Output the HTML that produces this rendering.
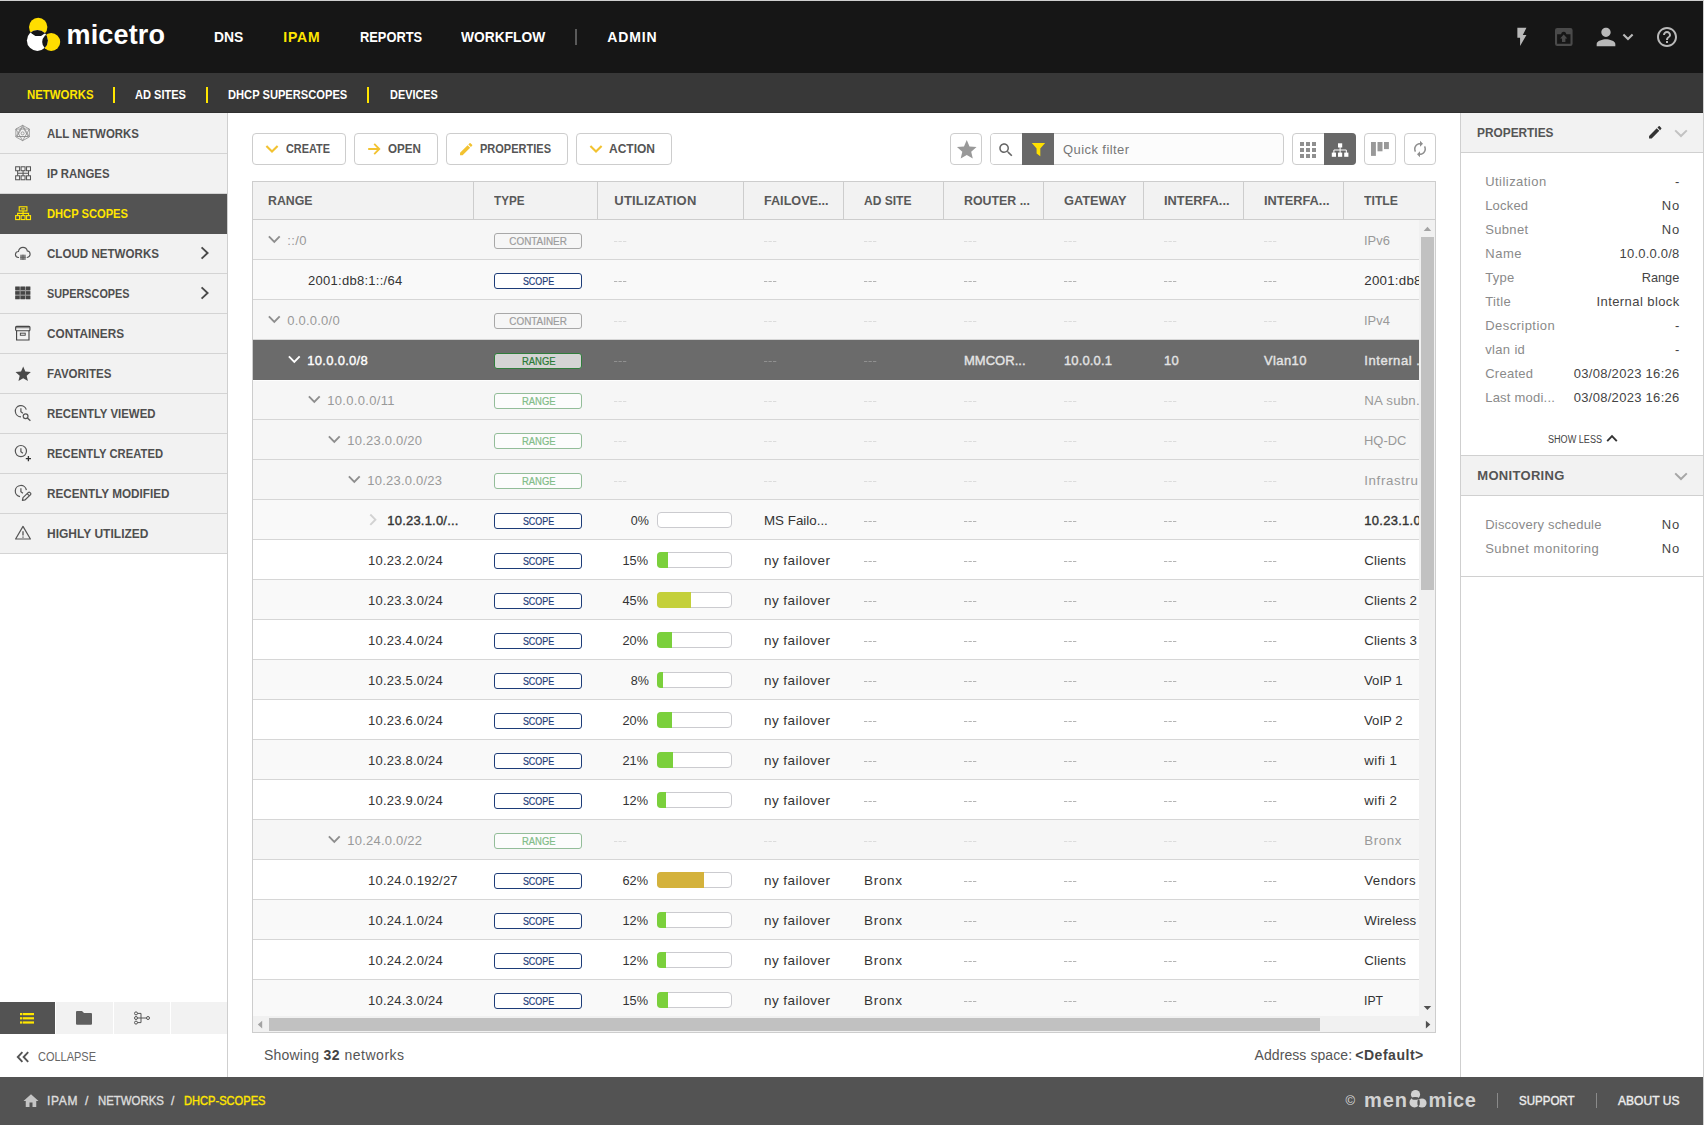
<!DOCTYPE html>
<html><head><meta charset="utf-8"><title>Micetro</title><style>
html,body{margin:0;padding:0;}
body{width:1704px;height:1125px;position:relative;overflow:hidden;background:#fff;font-family:'Liberation Sans', sans-serif;}
.b{position:absolute;box-sizing:border-box;}
.t{position:absolute;white-space:pre;line-height:20px;font-family:'Liberation Sans', sans-serif;}
.clip{position:absolute;overflow:hidden;}
</style></head><body>
<div class="b" style="left:0px;top:0px;width:1704px;height:73px;background:#161616;"></div>
<div class="b" style="left:0px;top:0px;width:1704px;height:1px;background:#cfcfcf;"></div>
<div class="b" style="left:0px;top:73px;width:1704px;height:40px;background:#383838;"></div>
<div class="b" style="left:0px;top:112px;width:1704px;height:1px;background:#303030;"></div>
<svg class="b" style="left:24px;top:14px;" width="38" height="40" viewBox="0 0 38 40">
<defs><clipPath id="lgA"><circle cx="14.2" cy="12.9" r="9.2"/></clipPath><clipPath id="lgC"><circle cx="27.2" cy="28" r="9"/></clipPath></defs>
<circle cx="14.2" cy="12.9" r="9.2" fill="#ffdd00"/>
<circle cx="27.2" cy="28" r="9" fill="#ffdd00"/>
<circle cx="13.4" cy="26.4" r="10.5" fill="#fff"/>
<circle cx="13.4" cy="26.4" r="10.5" fill="#161616" clip-path="url(#lgA)"/>
<circle cx="13.4" cy="26.4" r="10.5" fill="#161616" clip-path="url(#lgC)"/>
</svg>
<span class="t" style="top:24.5px;font-size:27px;font-weight:700;color:#fff;letter-spacing:0.159px;left:66.5px;">micetro</span>
<span class="t" style="top:27.0px;font-size:14px;font-weight:700;color:#fff;transform:scaleX(0.9911);transform-origin:0 50%;left:214.4px;">DNS</span>
<span class="t" style="top:27.0px;font-size:14px;font-weight:700;color:#ffe600;letter-spacing:0.81px;left:283.3px;">IPAM</span>
<span class="t" style="top:27.0px;font-size:14px;font-weight:700;color:#fff;transform:scaleX(0.9189);transform-origin:0 50%;left:360.2px;">REPORTS</span>
<span class="t" style="top:27.0px;font-size:14px;font-weight:700;color:#fff;transform:scaleX(0.9844);transform-origin:0 50%;left:461.4px;">WORKFLOW</span>
<div class="b" style="left:575px;top:29px;width:2px;height:16px;background:#5a5a5a;"></div>
<span class="t" style="top:27.0px;font-size:14px;font-weight:700;color:#fff;letter-spacing:0.827px;left:607.3px;">ADMIN</span>
<span class="t" style="top:84.5px;font-size:12px;font-weight:700;color:#ffe600;transform:scaleX(0.95);transform-origin:0 50%;left:26.6px;">NETWORKS</span>
<div class="b" style="left:113px;top:87px;width:2px;height:16px;background:#ffe600;"></div>
<span class="t" style="top:84.5px;font-size:12px;font-weight:700;color:#fff;transform:scaleX(0.9215);transform-origin:0 50%;left:135px;">AD SITES</span>
<div class="b" style="left:206px;top:87px;width:2px;height:16px;background:#ffe600;"></div>
<span class="t" style="top:84.5px;font-size:12px;font-weight:700;color:#fff;transform:scaleX(0.9285);transform-origin:0 50%;left:228px;">DHCP SUPERSCOPES</span>
<div class="b" style="left:367px;top:87px;width:2px;height:16px;background:#ffe600;"></div>
<span class="t" style="top:84.5px;font-size:12px;font-weight:700;color:#fff;transform:scaleX(0.9091);transform-origin:0 50%;left:389.5px;">DEVICES</span>
<div class="b" style="left:0px;top:113px;width:227px;height:441px;background:#f2f2f2;"></div>
<div class="b" style="left:227px;top:113px;width:1px;height:964px;background:#cfcfcf;"></div>
<div class="b" style="left:0px;top:153px;width:227px;height:1px;background:#d4d4d4;"></div>
<span class="t" style="top:123.5px;font-size:12px;font-weight:700;color:#4f4f4f;transform:scaleX(0.9538);transform-origin:0 50%;left:47px;">ALL NETWORKS</span>
<div class="b" style="left:0px;top:193px;width:227px;height:1px;background:#d4d4d4;"></div>
<span class="t" style="top:163.5px;font-size:12px;font-weight:700;color:#4f4f4f;transform:scaleX(0.9499);transform-origin:0 50%;left:47px;">IP RANGES</span>
<div class="b" style="left:0px;top:233px;width:227px;height:1px;background:#d4d4d4;"></div>
<div class="b" style="left:0px;top:194px;width:227px;height:40px;background:#535353;"></div>
<span class="t" style="top:203.5px;font-size:12px;font-weight:700;color:#ffe600;transform:scaleX(0.9295);transform-origin:0 50%;left:47px;">DHCP SCOPES</span>
<div class="b" style="left:0px;top:273px;width:227px;height:1px;background:#d4d4d4;"></div>
<span class="t" style="top:243.5px;font-size:12px;font-weight:700;color:#4f4f4f;transform:scaleX(0.9655);transform-origin:0 50%;left:47px;">CLOUD NETWORKS</span>
<div class="b" style="left:0px;top:313px;width:227px;height:1px;background:#d4d4d4;"></div>
<span class="t" style="top:283.5px;font-size:12px;font-weight:700;color:#4f4f4f;transform:scaleX(0.903);transform-origin:0 50%;left:47px;">SUPERSCOPES</span>
<div class="b" style="left:0px;top:353px;width:227px;height:1px;background:#d4d4d4;"></div>
<span class="t" style="top:323.5px;font-size:12px;font-weight:700;color:#4f4f4f;transform:scaleX(0.9815);transform-origin:0 50%;left:47px;">CONTAINERS</span>
<div class="b" style="left:0px;top:393px;width:227px;height:1px;background:#d4d4d4;"></div>
<span class="t" style="top:363.5px;font-size:12px;font-weight:700;color:#4f4f4f;transform:scaleX(0.9609);transform-origin:0 50%;left:47px;">FAVORITES</span>
<div class="b" style="left:0px;top:433px;width:227px;height:1px;background:#d4d4d4;"></div>
<span class="t" style="top:403.5px;font-size:12px;font-weight:700;color:#4f4f4f;transform:scaleX(0.9515);transform-origin:0 50%;left:47px;">RECENTLY VIEWED</span>
<div class="b" style="left:0px;top:473px;width:227px;height:1px;background:#d4d4d4;"></div>
<span class="t" style="top:443.5px;font-size:12px;font-weight:700;color:#4f4f4f;transform:scaleX(0.937);transform-origin:0 50%;left:47px;">RECENTLY CREATED</span>
<div class="b" style="left:0px;top:513px;width:227px;height:1px;background:#d4d4d4;"></div>
<span class="t" style="top:483.5px;font-size:12px;font-weight:700;color:#4f4f4f;transform:scaleX(0.9772);transform-origin:0 50%;left:47px;">RECENTLY MODIFIED</span>
<div class="b" style="left:0px;top:553px;width:227px;height:1px;background:#d4d4d4;"></div>
<span class="t" style="top:523.5px;font-size:12px;font-weight:700;color:#4f4f4f;letter-spacing:0.011px;left:47px;">HIGHLY UTILIZED</span>
<div class="b" style="left:0px;top:1002px;width:55px;height:32px;background:#535353;"></div>
<div class="b" style="left:56px;top:1002px;width:57px;height:32px;background:#f2f2f2;"></div>
<div class="b" style="left:114px;top:1002px;width:56px;height:32px;background:#f2f2f2;"></div>
<div class="b" style="left:171px;top:1002px;width:56px;height:32px;background:#f2f2f2;"></div>
<span class="t" style="top:1046.5px;font-size:12px;color:#666;transform:scaleX(0.9152);transform-origin:0 50%;left:37.5px;">COLLAPSE</span>
<div class="b" style="left:0px;top:1077px;width:1704px;height:48px;background:#535353;"></div>
<span class="t" style="top:1090.5px;font-size:12px;-webkit-text-stroke:0.38px;color:#dcdcdc;letter-spacing:0.682px;left:47px;">IPAM</span>
<span class="t" style="top:1090.5px;font-size:12px;-webkit-text-stroke:0.38px;color:#dcdcdc;left:85px;">/</span>
<span class="t" style="top:1090.5px;font-size:12px;-webkit-text-stroke:0.38px;color:#dcdcdc;transform:scaleX(0.9518);transform-origin:0 50%;left:97.5px;">NETWORKS</span>
<span class="t" style="top:1090.5px;font-size:12px;-webkit-text-stroke:0.38px;color:#dcdcdc;left:171px;">/</span>
<span class="t" style="top:1090.5px;font-size:12px;-webkit-text-stroke:0.38px;color:#ffe600;transform:scaleX(0.926);transform-origin:0 50%;left:184px;">DHCP-SCOPES</span>
<span class="t" style="top:1090.5px;font-size:13px;color:#ddd;left:1345.4px;">©</span>
<span class="t" style="top:1090.0px;font-size:20px;font-weight:700;color:#d2d2d2;letter-spacing:0.938px;left:1364px;">men</span>
<span class="t" style="top:1090.0px;font-size:20px;font-weight:700;color:#d2d2d2;letter-spacing:0.635px;left:1428.5px;">mice</span>
<svg class="b" style="left:1408px;top:1088px;" width="22" height="22" viewBox="0 0 22 22">
<circle cx="7.5" cy="6.5" r="4.6" fill="#d2d2d2"/>
<circle cx="6.5" cy="14.5" r="5" fill="#d2d2d2"/>
<circle cx="14" cy="15" r="4.6" fill="#d2d2d2"/>
<ellipse cx="7.2" cy="10.4" rx="3.4" ry="1.4" fill="#535353"/>
<ellipse cx="10.6" cy="14.8" rx="1.2" ry="3.3" fill="#535353"/>
</svg>
<div class="b" style="left:1497px;top:1093px;width:1px;height:15px;background:#8a8a8a;"></div>
<span class="t" style="top:1090.5px;font-size:12px;-webkit-text-stroke:0.38px;color:#ececec;transform:scaleX(0.9603);transform-origin:0 50%;left:1519.3px;">SUPPORT</span>
<div class="b" style="left:1596px;top:1093px;width:1px;height:15px;background:#8a8a8a;"></div>
<span class="t" style="top:1090.5px;font-size:12px;-webkit-text-stroke:0.38px;color:#ececec;letter-spacing:0.054px;left:1618px;">ABOUT US</span>
<div class="b" style="left:1703px;top:0px;width:1px;height:1125px;background:#cfcfcf;"></div>
<div class="b" style="left:252px;top:133px;width:94px;height:32px;background:#fff;border:1px solid #cdcdcd;border-radius:4px;"></div>
<span class="t" style="top:139.0px;font-size:12px;font-weight:700;color:#555;transform:scaleX(0.9081);transform-origin:0 50%;left:285.5px;">CREATE</span>
<div class="b" style="left:354px;top:133px;width:84px;height:32px;background:#fff;border:1px solid #cdcdcd;border-radius:4px;"></div>
<span class="t" style="top:139.0px;font-size:12px;font-weight:700;color:#555;transform:scaleX(0.9701);transform-origin:0 50%;left:387.5px;">OPEN</span>
<div class="b" style="left:446px;top:133px;width:122px;height:32px;background:#fff;border:1px solid #cdcdcd;border-radius:4px;"></div>
<span class="t" style="top:139.0px;font-size:12px;font-weight:700;color:#555;transform:scaleX(0.9178);transform-origin:0 50%;left:479.5px;">PROPERTIES</span>
<div class="b" style="left:576px;top:133px;width:96px;height:32px;background:#fff;border:1px solid #cdcdcd;border-radius:4px;"></div>
<span class="t" style="top:139.0px;font-size:12px;font-weight:700;color:#555;left:609px;">ACTION</span>
<div class="b" style="left:950px;top:133px;width:32px;height:32px;background:#fff;border:1px solid #cdcdcd;border-radius:4px;"></div>
<div class="b" style="left:990px;top:133px;width:294px;height:32px;background:#fcfcfc;border:1px solid #cdcdcd;border-radius:4px;"></div>
<div class="b" style="left:991px;top:134px;width:31px;height:30px;background:#fff;border-radius:3px;"></div>
<div class="b" style="left:1022px;top:133px;width:32px;height:32px;background:#686868;"></div>
<span class="t" style="top:139.5px;font-size:13px;color:#777;letter-spacing:0.418px;left:1063px;">Quick filter</span>
<div class="b" style="left:1292px;top:133px;width:64px;height:32px;background:#fff;border:1px solid #cdcdcd;border-radius:4px;"></div>
<div class="b" style="left:1324px;top:133px;width:32px;height:32px;background:#686868;border-radius:0 4px 4px 0;"></div>
<div class="b" style="left:1364px;top:133px;width:32px;height:32px;background:#fff;border:1px solid #cdcdcd;border-radius:4px;"></div>
<div class="b" style="left:1404px;top:133px;width:32px;height:32px;background:#fff;border:1px solid #cdcdcd;border-radius:4px;"></div>
<div class="b" style="left:252px;top:181px;width:1184px;height:852px;border:1px solid #cdcdcd;"></div>
<div class="b" style="left:253px;top:182px;width:1182px;height:37px;background:#f2f2f2;"></div>
<div class="b" style="left:253px;top:219px;width:1182px;height:1px;background:#cdcdcd;"></div>
<div class="b" style="left:473px;top:182px;width:1px;height:37px;background:#cdcdcd;"></div>
<div class="b" style="left:597px;top:182px;width:1px;height:37px;background:#cdcdcd;"></div>
<div class="b" style="left:743px;top:182px;width:1px;height:37px;background:#cdcdcd;"></div>
<div class="b" style="left:843px;top:182px;width:1px;height:37px;background:#cdcdcd;"></div>
<div class="b" style="left:943px;top:182px;width:1px;height:37px;background:#cdcdcd;"></div>
<div class="b" style="left:1043px;top:182px;width:1px;height:37px;background:#cdcdcd;"></div>
<div class="b" style="left:1143px;top:182px;width:1px;height:37px;background:#cdcdcd;"></div>
<div class="b" style="left:1243px;top:182px;width:1px;height:37px;background:#cdcdcd;"></div>
<div class="b" style="left:1343px;top:182px;width:1px;height:37px;background:#cdcdcd;"></div>
<span class="t" style="top:190.5px;font-size:13px;font-weight:700;color:#595959;transform:scaleX(0.9478);transform-origin:0 50%;left:268.3px;">RANGE</span>
<span class="t" style="top:190.5px;font-size:13px;font-weight:700;color:#595959;transform:scaleX(0.8979);transform-origin:0 50%;left:494.2px;">TYPE</span>
<span class="t" style="top:190.5px;font-size:13px;font-weight:700;color:#595959;letter-spacing:0.208px;left:614.3px;">UTILIZATION</span>
<span class="t" style="top:190.5px;font-size:13px;font-weight:700;color:#595959;transform:scaleX(0.9704);transform-origin:0 50%;left:764.1px;">FAILOVE...</span>
<span class="t" style="top:190.5px;font-size:13px;font-weight:700;color:#595959;transform:scaleX(0.926);transform-origin:0 50%;left:864.1px;">AD SITE</span>
<span class="t" style="top:190.5px;font-size:13px;font-weight:700;color:#595959;transform:scaleX(0.9518);transform-origin:0 50%;left:964.1px;">ROUTER ...</span>
<span class="t" style="top:190.5px;font-size:13px;font-weight:700;color:#595959;transform:scaleX(0.983);transform-origin:0 50%;left:1064.1px;">GATEWAY</span>
<span class="t" style="top:190.5px;font-size:13px;font-weight:700;color:#595959;transform:scaleX(0.9857);transform-origin:0 50%;left:1164.1px;">INTERFA...</span>
<span class="t" style="top:190.5px;font-size:13px;font-weight:700;color:#595959;transform:scaleX(0.9857);transform-origin:0 50%;left:1264.1px;">INTERFA...</span>
<span class="t" style="top:190.5px;font-size:13px;font-weight:700;color:#595959;transform:scaleX(0.9416);transform-origin:0 50%;left:1364.1px;">TITLE</span>
<div class="clip" style="left:0;top:0;width:1419px;height:1016px;">
<div class="b" style="left:253px;top:220px;width:1166px;height:39px;background:#f6f6f6;"></div>
<div class="b" style="left:253px;top:259px;width:1166px;height:1px;background:#d6d6d6;"></div>
<svg class="b" style="left:267.6px;top:235px;" width="13" height="9" viewBox="0 0 13 9"><path d="M0.9 1.4 L6.3 6.9 L11.7 1.4" fill="none" stroke="#8e8e8e" stroke-width="1.9"/></svg>
<span class="t" style="top:230.5px;font-size:13px;color:#999;letter-spacing:0.349px;left:287.3px;">::/0</span>
<div class="b" style="left:494px;top:233px;width:88px;height:16px;background:transparent;border:1px solid #a8a8a8;border-radius:3px;"></div>
<span class="t" style="top:231.75px;font-size:10px;-webkit-text-stroke:0.2px;color:#9c9c9c;transform:scaleX(0.9904);transform-origin:50% 50%;left:509.22px;">CONTAINER</span>
<svg class="b" style="left:614px;top:240px;" width="14" height="3" viewBox="0 0 14 3"><path d="M0 1.5 H3.3 M4.5 1.5 H7.8 M9 1.5 H12.3" stroke="#dcdcdc" stroke-width="1"/></svg>
<svg class="b" style="left:764px;top:240px;" width="14" height="3" viewBox="0 0 14 3"><path d="M0 1.5 H3.3 M4.5 1.5 H7.8 M9 1.5 H12.3" stroke="#dcdcdc" stroke-width="1"/></svg>
<svg class="b" style="left:864px;top:240px;" width="14" height="3" viewBox="0 0 14 3"><path d="M0 1.5 H3.3 M4.5 1.5 H7.8 M9 1.5 H12.3" stroke="#dcdcdc" stroke-width="1"/></svg>
<svg class="b" style="left:964px;top:240px;" width="14" height="3" viewBox="0 0 14 3"><path d="M0 1.5 H3.3 M4.5 1.5 H7.8 M9 1.5 H12.3" stroke="#dcdcdc" stroke-width="1"/></svg>
<svg class="b" style="left:1064px;top:240px;" width="14" height="3" viewBox="0 0 14 3"><path d="M0 1.5 H3.3 M4.5 1.5 H7.8 M9 1.5 H12.3" stroke="#dcdcdc" stroke-width="1"/></svg>
<svg class="b" style="left:1164px;top:240px;" width="14" height="3" viewBox="0 0 14 3"><path d="M0 1.5 H3.3 M4.5 1.5 H7.8 M9 1.5 H12.3" stroke="#dcdcdc" stroke-width="1"/></svg>
<svg class="b" style="left:1264px;top:240px;" width="14" height="3" viewBox="0 0 14 3"><path d="M0 1.5 H3.3 M4.5 1.5 H7.8 M9 1.5 H12.3" stroke="#dcdcdc" stroke-width="1"/></svg>
<span class="t" style="top:230.5px;font-size:13.3px;color:#999;transform:scaleX(0.9733);transform-origin:0 50%;left:1364.3px;">IPv6</span>
<div class="b" style="left:253px;top:260px;width:1166px;height:39px;background:#f9f9f9;"></div>
<div class="b" style="left:253px;top:299px;width:1166px;height:1px;background:#d6d6d6;"></div>
<span class="t" style="top:270.5px;font-size:13px;color:#333;letter-spacing:0.261px;left:308.1px;">2001:db8:1::/64</span>
<div class="b" style="left:494px;top:273px;width:88px;height:16px;background:#fff;border:1px solid #1d3c78;border-radius:3px;"></div>
<span class="t" style="top:271.75px;font-size:10px;-webkit-text-stroke:0.2px;color:#1d3c78;transform:scaleX(0.891);transform-origin:50% 50%;left:520.79px;">SCOPE</span>
<svg class="b" style="left:614px;top:280px;" width="14" height="3" viewBox="0 0 14 3"><path d="M0 1.5 H3.3 M4.5 1.5 H7.8 M9 1.5 H12.3" stroke="#b4b4b4" stroke-width="1"/></svg>
<svg class="b" style="left:764px;top:280px;" width="14" height="3" viewBox="0 0 14 3"><path d="M0 1.5 H3.3 M4.5 1.5 H7.8 M9 1.5 H12.3" stroke="#b4b4b4" stroke-width="1"/></svg>
<svg class="b" style="left:864px;top:280px;" width="14" height="3" viewBox="0 0 14 3"><path d="M0 1.5 H3.3 M4.5 1.5 H7.8 M9 1.5 H12.3" stroke="#b4b4b4" stroke-width="1"/></svg>
<svg class="b" style="left:964px;top:280px;" width="14" height="3" viewBox="0 0 14 3"><path d="M0 1.5 H3.3 M4.5 1.5 H7.8 M9 1.5 H12.3" stroke="#b4b4b4" stroke-width="1"/></svg>
<svg class="b" style="left:1064px;top:280px;" width="14" height="3" viewBox="0 0 14 3"><path d="M0 1.5 H3.3 M4.5 1.5 H7.8 M9 1.5 H12.3" stroke="#b4b4b4" stroke-width="1"/></svg>
<svg class="b" style="left:1164px;top:280px;" width="14" height="3" viewBox="0 0 14 3"><path d="M0 1.5 H3.3 M4.5 1.5 H7.8 M9 1.5 H12.3" stroke="#b4b4b4" stroke-width="1"/></svg>
<svg class="b" style="left:1264px;top:280px;" width="14" height="3" viewBox="0 0 14 3"><path d="M0 1.5 H3.3 M4.5 1.5 H7.8 M9 1.5 H12.3" stroke="#b4b4b4" stroke-width="1"/></svg>
<span class="t" style="top:270.5px;font-size:13.3px;color:#333;letter-spacing:0.241px;left:1364.3px;">2001:db8:1::/64</span>
<div class="b" style="left:253px;top:300px;width:1166px;height:39px;background:#f6f6f6;"></div>
<div class="b" style="left:253px;top:339px;width:1166px;height:1px;background:#d6d6d6;"></div>
<svg class="b" style="left:267.6px;top:315px;" width="13" height="9" viewBox="0 0 13 9"><path d="M0.9 1.4 L6.3 6.9 L11.7 1.4" fill="none" stroke="#8e8e8e" stroke-width="1.9"/></svg>
<span class="t" style="top:310.5px;font-size:13px;color:#999;letter-spacing:0.214px;left:287.3px;">0.0.0.0/0</span>
<div class="b" style="left:494px;top:313px;width:88px;height:16px;background:transparent;border:1px solid #a8a8a8;border-radius:3px;"></div>
<span class="t" style="top:311.75px;font-size:10px;-webkit-text-stroke:0.2px;color:#9c9c9c;transform:scaleX(0.9904);transform-origin:50% 50%;left:509.22px;">CONTAINER</span>
<svg class="b" style="left:614px;top:320px;" width="14" height="3" viewBox="0 0 14 3"><path d="M0 1.5 H3.3 M4.5 1.5 H7.8 M9 1.5 H12.3" stroke="#dcdcdc" stroke-width="1"/></svg>
<svg class="b" style="left:764px;top:320px;" width="14" height="3" viewBox="0 0 14 3"><path d="M0 1.5 H3.3 M4.5 1.5 H7.8 M9 1.5 H12.3" stroke="#dcdcdc" stroke-width="1"/></svg>
<svg class="b" style="left:864px;top:320px;" width="14" height="3" viewBox="0 0 14 3"><path d="M0 1.5 H3.3 M4.5 1.5 H7.8 M9 1.5 H12.3" stroke="#dcdcdc" stroke-width="1"/></svg>
<svg class="b" style="left:964px;top:320px;" width="14" height="3" viewBox="0 0 14 3"><path d="M0 1.5 H3.3 M4.5 1.5 H7.8 M9 1.5 H12.3" stroke="#dcdcdc" stroke-width="1"/></svg>
<svg class="b" style="left:1064px;top:320px;" width="14" height="3" viewBox="0 0 14 3"><path d="M0 1.5 H3.3 M4.5 1.5 H7.8 M9 1.5 H12.3" stroke="#dcdcdc" stroke-width="1"/></svg>
<svg class="b" style="left:1164px;top:320px;" width="14" height="3" viewBox="0 0 14 3"><path d="M0 1.5 H3.3 M4.5 1.5 H7.8 M9 1.5 H12.3" stroke="#dcdcdc" stroke-width="1"/></svg>
<svg class="b" style="left:1264px;top:320px;" width="14" height="3" viewBox="0 0 14 3"><path d="M0 1.5 H3.3 M4.5 1.5 H7.8 M9 1.5 H12.3" stroke="#dcdcdc" stroke-width="1"/></svg>
<span class="t" style="top:310.5px;font-size:13.3px;color:#999;transform:scaleX(0.9733);transform-origin:0 50%;left:1364.3px;">IPv4</span>
<div class="b" style="left:253px;top:340px;width:1166px;height:39px;background:#6b6b6b;"></div>
<div class="b" style="left:253px;top:379px;width:1166px;height:1px;background:#6b6b6b;"></div>
<svg class="b" style="left:287.6px;top:355px;" width="13" height="9" viewBox="0 0 13 9"><path d="M0.9 1.4 L6.3 6.9 L11.7 1.4" fill="none" stroke="#fff" stroke-width="1.9"/></svg>
<span class="t" style="top:350.5px;font-size:13px;-webkit-text-stroke:0.38px;color:#fff;letter-spacing:0.284px;left:307.3px;">10.0.0.0/8</span>
<div class="b" style="left:494px;top:353px;width:88px;height:16px;background:#d4d4d4;border:1px solid #2f7d3b;border-radius:3px;"></div>
<span class="t" style="top:351.75px;font-size:10px;-webkit-text-stroke:0.2px;color:#2a7a36;transform:scaleX(0.9448);transform-origin:50% 50%;left:520.52px;">RANGE</span>
<svg class="b" style="left:614px;top:360px;" width="14" height="3" viewBox="0 0 14 3"><path d="M0 1.5 H3.3 M4.5 1.5 H7.8 M9 1.5 H12.3" stroke="#909090" stroke-width="1"/></svg>
<svg class="b" style="left:764px;top:360px;" width="14" height="3" viewBox="0 0 14 3"><path d="M0 1.5 H3.3 M4.5 1.5 H7.8 M9 1.5 H12.3" stroke="#909090" stroke-width="1"/></svg>
<svg class="b" style="left:864px;top:360px;" width="14" height="3" viewBox="0 0 14 3"><path d="M0 1.5 H3.3 M4.5 1.5 H7.8 M9 1.5 H12.3" stroke="#909090" stroke-width="1"/></svg>
<span class="t" style="top:350.5px;font-size:13px;-webkit-text-stroke:0.38px;color:#e4e4e4;letter-spacing:0.02px;left:964px;">MMCOR...</span>
<span class="t" style="top:350.5px;font-size:13px;-webkit-text-stroke:0.38px;color:#e4e4e4;letter-spacing:0.126px;left:1064px;">10.0.0.1</span>
<span class="t" style="top:350.5px;font-size:13px;-webkit-text-stroke:0.38px;color:#e4e4e4;letter-spacing:0.385px;left:1164px;">10</span>
<span class="t" style="top:350.5px;font-size:13px;-webkit-text-stroke:0.38px;color:#e4e4e4;letter-spacing:0.379px;left:1264px;">Vlan10</span>
<span class="t" style="top:350.5px;font-size:13px;-webkit-text-stroke:0.38px;color:#e4e4e4;letter-spacing:0.562px;left:1364.3px;">Internal ...</span>
<div class="b" style="left:253px;top:380px;width:1166px;height:39px;background:#f6f6f6;"></div>
<div class="b" style="left:253px;top:380px;width:1166px;height:1px;background:#fdfdfd;"></div>
<div class="b" style="left:253px;top:419px;width:1166px;height:1px;background:#d6d6d6;"></div>
<svg class="b" style="left:307.6px;top:395px;" width="13" height="9" viewBox="0 0 13 9"><path d="M0.9 1.4 L6.3 6.9 L11.7 1.4" fill="none" stroke="#8e8e8e" stroke-width="1.9"/></svg>
<span class="t" style="top:390.5px;font-size:13px;color:#999;letter-spacing:0.309px;left:327.3px;">10.0.0.0/11</span>
<div class="b" style="left:494px;top:393px;width:88px;height:16px;background:#fcfcfc;border:1px solid #93bd99;border-radius:3px;"></div>
<span class="t" style="top:391.75px;font-size:10px;-webkit-text-stroke:0.2px;color:#82bc88;transform:scaleX(0.9448);transform-origin:50% 50%;left:520.52px;">RANGE</span>
<svg class="b" style="left:614px;top:400px;" width="14" height="3" viewBox="0 0 14 3"><path d="M0 1.5 H3.3 M4.5 1.5 H7.8 M9 1.5 H12.3" stroke="#dcdcdc" stroke-width="1"/></svg>
<svg class="b" style="left:764px;top:400px;" width="14" height="3" viewBox="0 0 14 3"><path d="M0 1.5 H3.3 M4.5 1.5 H7.8 M9 1.5 H12.3" stroke="#dcdcdc" stroke-width="1"/></svg>
<svg class="b" style="left:864px;top:400px;" width="14" height="3" viewBox="0 0 14 3"><path d="M0 1.5 H3.3 M4.5 1.5 H7.8 M9 1.5 H12.3" stroke="#dcdcdc" stroke-width="1"/></svg>
<svg class="b" style="left:964px;top:400px;" width="14" height="3" viewBox="0 0 14 3"><path d="M0 1.5 H3.3 M4.5 1.5 H7.8 M9 1.5 H12.3" stroke="#dcdcdc" stroke-width="1"/></svg>
<svg class="b" style="left:1064px;top:400px;" width="14" height="3" viewBox="0 0 14 3"><path d="M0 1.5 H3.3 M4.5 1.5 H7.8 M9 1.5 H12.3" stroke="#dcdcdc" stroke-width="1"/></svg>
<svg class="b" style="left:1164px;top:400px;" width="14" height="3" viewBox="0 0 14 3"><path d="M0 1.5 H3.3 M4.5 1.5 H7.8 M9 1.5 H12.3" stroke="#dcdcdc" stroke-width="1"/></svg>
<svg class="b" style="left:1264px;top:400px;" width="14" height="3" viewBox="0 0 14 3"><path d="M0 1.5 H3.3 M4.5 1.5 H7.8 M9 1.5 H12.3" stroke="#dcdcdc" stroke-width="1"/></svg>
<span class="t" style="top:390.5px;font-size:13.3px;color:#999;letter-spacing:0.193px;left:1364.3px;">NA subn...</span>
<div class="b" style="left:253px;top:420px;width:1166px;height:39px;background:#f6f6f6;"></div>
<div class="b" style="left:253px;top:459px;width:1166px;height:1px;background:#d6d6d6;"></div>
<svg class="b" style="left:327.6px;top:435px;" width="13" height="9" viewBox="0 0 13 9"><path d="M0.9 1.4 L6.3 6.9 L11.7 1.4" fill="none" stroke="#8e8e8e" stroke-width="1.9"/></svg>
<span class="t" style="top:430.5px;font-size:13px;color:#999;letter-spacing:0.211px;left:347.3px;">10.23.0.0/20</span>
<div class="b" style="left:494px;top:433px;width:88px;height:16px;background:#fcfcfc;border:1px solid #93bd99;border-radius:3px;"></div>
<span class="t" style="top:431.75px;font-size:10px;-webkit-text-stroke:0.2px;color:#82bc88;transform:scaleX(0.9448);transform-origin:50% 50%;left:520.52px;">RANGE</span>
<svg class="b" style="left:614px;top:440px;" width="14" height="3" viewBox="0 0 14 3"><path d="M0 1.5 H3.3 M4.5 1.5 H7.8 M9 1.5 H12.3" stroke="#dcdcdc" stroke-width="1"/></svg>
<svg class="b" style="left:764px;top:440px;" width="14" height="3" viewBox="0 0 14 3"><path d="M0 1.5 H3.3 M4.5 1.5 H7.8 M9 1.5 H12.3" stroke="#dcdcdc" stroke-width="1"/></svg>
<svg class="b" style="left:864px;top:440px;" width="14" height="3" viewBox="0 0 14 3"><path d="M0 1.5 H3.3 M4.5 1.5 H7.8 M9 1.5 H12.3" stroke="#dcdcdc" stroke-width="1"/></svg>
<svg class="b" style="left:964px;top:440px;" width="14" height="3" viewBox="0 0 14 3"><path d="M0 1.5 H3.3 M4.5 1.5 H7.8 M9 1.5 H12.3" stroke="#dcdcdc" stroke-width="1"/></svg>
<svg class="b" style="left:1064px;top:440px;" width="14" height="3" viewBox="0 0 14 3"><path d="M0 1.5 H3.3 M4.5 1.5 H7.8 M9 1.5 H12.3" stroke="#dcdcdc" stroke-width="1"/></svg>
<svg class="b" style="left:1164px;top:440px;" width="14" height="3" viewBox="0 0 14 3"><path d="M0 1.5 H3.3 M4.5 1.5 H7.8 M9 1.5 H12.3" stroke="#dcdcdc" stroke-width="1"/></svg>
<svg class="b" style="left:1264px;top:440px;" width="14" height="3" viewBox="0 0 14 3"><path d="M0 1.5 H3.3 M4.5 1.5 H7.8 M9 1.5 H12.3" stroke="#dcdcdc" stroke-width="1"/></svg>
<span class="t" style="top:430.5px;font-size:13.3px;color:#999;transform:scaleX(0.9721);transform-origin:0 50%;left:1364.3px;">HQ-DC</span>
<div class="b" style="left:253px;top:460px;width:1166px;height:39px;background:#f6f6f6;"></div>
<div class="b" style="left:253px;top:499px;width:1166px;height:1px;background:#d6d6d6;"></div>
<svg class="b" style="left:347.6px;top:475px;" width="13" height="9" viewBox="0 0 13 9"><path d="M0.9 1.4 L6.3 6.9 L11.7 1.4" fill="none" stroke="#8e8e8e" stroke-width="1.9"/></svg>
<span class="t" style="top:470.5px;font-size:13px;color:#999;letter-spacing:0.211px;left:367.3px;">10.23.0.0/23</span>
<div class="b" style="left:494px;top:473px;width:88px;height:16px;background:#fcfcfc;border:1px solid #93bd99;border-radius:3px;"></div>
<span class="t" style="top:471.75px;font-size:10px;-webkit-text-stroke:0.2px;color:#82bc88;transform:scaleX(0.9448);transform-origin:50% 50%;left:520.52px;">RANGE</span>
<svg class="b" style="left:614px;top:480px;" width="14" height="3" viewBox="0 0 14 3"><path d="M0 1.5 H3.3 M4.5 1.5 H7.8 M9 1.5 H12.3" stroke="#dcdcdc" stroke-width="1"/></svg>
<svg class="b" style="left:764px;top:480px;" width="14" height="3" viewBox="0 0 14 3"><path d="M0 1.5 H3.3 M4.5 1.5 H7.8 M9 1.5 H12.3" stroke="#dcdcdc" stroke-width="1"/></svg>
<svg class="b" style="left:864px;top:480px;" width="14" height="3" viewBox="0 0 14 3"><path d="M0 1.5 H3.3 M4.5 1.5 H7.8 M9 1.5 H12.3" stroke="#dcdcdc" stroke-width="1"/></svg>
<svg class="b" style="left:964px;top:480px;" width="14" height="3" viewBox="0 0 14 3"><path d="M0 1.5 H3.3 M4.5 1.5 H7.8 M9 1.5 H12.3" stroke="#dcdcdc" stroke-width="1"/></svg>
<svg class="b" style="left:1064px;top:480px;" width="14" height="3" viewBox="0 0 14 3"><path d="M0 1.5 H3.3 M4.5 1.5 H7.8 M9 1.5 H12.3" stroke="#dcdcdc" stroke-width="1"/></svg>
<svg class="b" style="left:1164px;top:480px;" width="14" height="3" viewBox="0 0 14 3"><path d="M0 1.5 H3.3 M4.5 1.5 H7.8 M9 1.5 H12.3" stroke="#dcdcdc" stroke-width="1"/></svg>
<svg class="b" style="left:1264px;top:480px;" width="14" height="3" viewBox="0 0 14 3"><path d="M0 1.5 H3.3 M4.5 1.5 H7.8 M9 1.5 H12.3" stroke="#dcdcdc" stroke-width="1"/></svg>
<span class="t" style="top:470.5px;font-size:13.3px;color:#999;letter-spacing:0.604px;left:1364.3px;">Infrastru...</span>
<div class="b" style="left:253px;top:500px;width:1166px;height:39px;background:#f9f9f9;"></div>
<div class="b" style="left:253px;top:539px;width:1166px;height:1px;background:#d6d6d6;"></div>
<svg class="b" style="left:369.4px;top:513px;" width="9" height="14" viewBox="0 0 9 14"><path d="M1.3 1.5 L6.4 6.7 L1.3 11.9" fill="none" stroke="#d2d2d2" stroke-width="1.9"/></svg>
<span class="t" style="top:510.5px;font-size:13px;-webkit-text-stroke:0.38px;color:#333;letter-spacing:0.205px;left:387.3px;">10.23.1.0/...</span>
<div class="b" style="left:494px;top:513px;width:88px;height:16px;background:#fff;border:1px solid #1d3c78;border-radius:3px;"></div>
<span class="t" style="top:511.75px;font-size:10px;-webkit-text-stroke:0.2px;color:#1d3c78;transform:scaleX(0.891);transform-origin:50% 50%;left:520.79px;">SCOPE</span>
<span class="t" style="top:510.5px;font-size:13px;color:#333;transform:scaleX(0.9648);transform-origin:100% 50%;left:629.7px;">0%</span>
<div class="b" style="left:657px;top:512px;width:75px;height:16px;background:#fff;border:1px solid #cbcbcf;border-radius:4px;"></div>
<span class="t" style="top:510.5px;font-size:13.5px;color:#333;transform:scaleX(0.9891);transform-origin:0 50%;left:764px;">MS Failo...</span>
<svg class="b" style="left:864px;top:520px;" width="14" height="3" viewBox="0 0 14 3"><path d="M0 1.5 H3.3 M4.5 1.5 H7.8 M9 1.5 H12.3" stroke="#b4b4b4" stroke-width="1"/></svg>
<svg class="b" style="left:964px;top:520px;" width="14" height="3" viewBox="0 0 14 3"><path d="M0 1.5 H3.3 M4.5 1.5 H7.8 M9 1.5 H12.3" stroke="#b4b4b4" stroke-width="1"/></svg>
<svg class="b" style="left:1064px;top:520px;" width="14" height="3" viewBox="0 0 14 3"><path d="M0 1.5 H3.3 M4.5 1.5 H7.8 M9 1.5 H12.3" stroke="#b4b4b4" stroke-width="1"/></svg>
<svg class="b" style="left:1164px;top:520px;" width="14" height="3" viewBox="0 0 14 3"><path d="M0 1.5 H3.3 M4.5 1.5 H7.8 M9 1.5 H12.3" stroke="#b4b4b4" stroke-width="1"/></svg>
<svg class="b" style="left:1264px;top:520px;" width="14" height="3" viewBox="0 0 14 3"><path d="M0 1.5 H3.3 M4.5 1.5 H7.8 M9 1.5 H12.3" stroke="#b4b4b4" stroke-width="1"/></svg>
<span class="t" style="top:510.5px;font-size:13px;-webkit-text-stroke:0.38px;color:#333;letter-spacing:0.267px;left:1364.3px;">10.23.1.0/24</span>
<div class="b" style="left:253px;top:540px;width:1166px;height:39px;background:#fff;"></div>
<div class="b" style="left:253px;top:579px;width:1166px;height:1px;background:#d6d6d6;"></div>
<span class="t" style="top:550.5px;font-size:13px;color:#333;letter-spacing:0.211px;left:368.1px;">10.23.2.0/24</span>
<div class="b" style="left:494px;top:553px;width:88px;height:16px;background:#fff;border:1px solid #1d3c78;border-radius:3px;"></div>
<span class="t" style="top:551.75px;font-size:10px;-webkit-text-stroke:0.2px;color:#1d3c78;transform:scaleX(0.891);transform-origin:50% 50%;left:520.79px;">SCOPE</span>
<span class="t" style="top:550.5px;font-size:13px;color:#333;transform:scaleX(0.9822);transform-origin:100% 50%;left:622.47px;">15%</span>
<div class="b" style="left:657px;top:552px;width:75px;height:16px;background:#fff;border:1px solid #cbcbcf;border-radius:4px;"></div>
<div class="b" style="left:657px;top:552px;width:11.2px;height:16px;background:#7bd03c;border-radius:4px 0 0 4px;"></div>
<span class="t" style="top:550.5px;font-size:13.5px;color:#333;letter-spacing:0.448px;left:764px;">ny failover</span>
<svg class="b" style="left:864px;top:560px;" width="14" height="3" viewBox="0 0 14 3"><path d="M0 1.5 H3.3 M4.5 1.5 H7.8 M9 1.5 H12.3" stroke="#b4b4b4" stroke-width="1"/></svg>
<svg class="b" style="left:964px;top:560px;" width="14" height="3" viewBox="0 0 14 3"><path d="M0 1.5 H3.3 M4.5 1.5 H7.8 M9 1.5 H12.3" stroke="#b4b4b4" stroke-width="1"/></svg>
<svg class="b" style="left:1064px;top:560px;" width="14" height="3" viewBox="0 0 14 3"><path d="M0 1.5 H3.3 M4.5 1.5 H7.8 M9 1.5 H12.3" stroke="#b4b4b4" stroke-width="1"/></svg>
<svg class="b" style="left:1164px;top:560px;" width="14" height="3" viewBox="0 0 14 3"><path d="M0 1.5 H3.3 M4.5 1.5 H7.8 M9 1.5 H12.3" stroke="#b4b4b4" stroke-width="1"/></svg>
<svg class="b" style="left:1264px;top:560px;" width="14" height="3" viewBox="0 0 14 3"><path d="M0 1.5 H3.3 M4.5 1.5 H7.8 M9 1.5 H12.3" stroke="#b4b4b4" stroke-width="1"/></svg>
<span class="t" style="top:550.5px;font-size:13.3px;color:#333;letter-spacing:0.162px;left:1364.3px;">Clients</span>
<div class="b" style="left:253px;top:580px;width:1166px;height:39px;background:#f9f9f9;"></div>
<div class="b" style="left:253px;top:619px;width:1166px;height:1px;background:#d6d6d6;"></div>
<span class="t" style="top:590.5px;font-size:13px;color:#333;letter-spacing:0.211px;left:368.1px;">10.23.3.0/24</span>
<div class="b" style="left:494px;top:593px;width:88px;height:16px;background:#fff;border:1px solid #1d3c78;border-radius:3px;"></div>
<span class="t" style="top:591.75px;font-size:10px;-webkit-text-stroke:0.2px;color:#1d3c78;transform:scaleX(0.891);transform-origin:50% 50%;left:520.79px;">SCOPE</span>
<span class="t" style="top:590.5px;font-size:13px;color:#333;transform:scaleX(0.9822);transform-origin:100% 50%;left:622.47px;">45%</span>
<div class="b" style="left:657px;top:592px;width:75px;height:16px;background:#fff;border:1px solid #cbcbcf;border-radius:4px;"></div>
<div class="b" style="left:657px;top:592px;width:33.8px;height:16px;background:#c4d03a;border-radius:4px 0 0 4px;"></div>
<span class="t" style="top:590.5px;font-size:13.5px;color:#333;letter-spacing:0.448px;left:764px;">ny failover</span>
<svg class="b" style="left:864px;top:600px;" width="14" height="3" viewBox="0 0 14 3"><path d="M0 1.5 H3.3 M4.5 1.5 H7.8 M9 1.5 H12.3" stroke="#b4b4b4" stroke-width="1"/></svg>
<svg class="b" style="left:964px;top:600px;" width="14" height="3" viewBox="0 0 14 3"><path d="M0 1.5 H3.3 M4.5 1.5 H7.8 M9 1.5 H12.3" stroke="#b4b4b4" stroke-width="1"/></svg>
<svg class="b" style="left:1064px;top:600px;" width="14" height="3" viewBox="0 0 14 3"><path d="M0 1.5 H3.3 M4.5 1.5 H7.8 M9 1.5 H12.3" stroke="#b4b4b4" stroke-width="1"/></svg>
<svg class="b" style="left:1164px;top:600px;" width="14" height="3" viewBox="0 0 14 3"><path d="M0 1.5 H3.3 M4.5 1.5 H7.8 M9 1.5 H12.3" stroke="#b4b4b4" stroke-width="1"/></svg>
<svg class="b" style="left:1264px;top:600px;" width="14" height="3" viewBox="0 0 14 3"><path d="M0 1.5 H3.3 M4.5 1.5 H7.8 M9 1.5 H12.3" stroke="#b4b4b4" stroke-width="1"/></svg>
<span class="t" style="top:590.5px;font-size:13.3px;color:#333;letter-spacing:0.114px;left:1364.3px;">Clients 2</span>
<div class="b" style="left:253px;top:620px;width:1166px;height:39px;background:#fff;"></div>
<div class="b" style="left:253px;top:659px;width:1166px;height:1px;background:#d6d6d6;"></div>
<span class="t" style="top:630.5px;font-size:13px;color:#333;letter-spacing:0.211px;left:368.1px;">10.23.4.0/24</span>
<div class="b" style="left:494px;top:633px;width:88px;height:16px;background:#fff;border:1px solid #1d3c78;border-radius:3px;"></div>
<span class="t" style="top:631.75px;font-size:10px;-webkit-text-stroke:0.2px;color:#1d3c78;transform:scaleX(0.891);transform-origin:50% 50%;left:520.79px;">SCOPE</span>
<span class="t" style="top:630.5px;font-size:13px;color:#333;transform:scaleX(0.9822);transform-origin:100% 50%;left:622.47px;">20%</span>
<div class="b" style="left:657px;top:632px;width:75px;height:16px;background:#fff;border:1px solid #cbcbcf;border-radius:4px;"></div>
<div class="b" style="left:657px;top:632px;width:15.0px;height:16px;background:#7bd03c;border-radius:4px 0 0 4px;"></div>
<span class="t" style="top:630.5px;font-size:13.5px;color:#333;letter-spacing:0.448px;left:764px;">ny failover</span>
<svg class="b" style="left:864px;top:640px;" width="14" height="3" viewBox="0 0 14 3"><path d="M0 1.5 H3.3 M4.5 1.5 H7.8 M9 1.5 H12.3" stroke="#b4b4b4" stroke-width="1"/></svg>
<svg class="b" style="left:964px;top:640px;" width="14" height="3" viewBox="0 0 14 3"><path d="M0 1.5 H3.3 M4.5 1.5 H7.8 M9 1.5 H12.3" stroke="#b4b4b4" stroke-width="1"/></svg>
<svg class="b" style="left:1064px;top:640px;" width="14" height="3" viewBox="0 0 14 3"><path d="M0 1.5 H3.3 M4.5 1.5 H7.8 M9 1.5 H12.3" stroke="#b4b4b4" stroke-width="1"/></svg>
<svg class="b" style="left:1164px;top:640px;" width="14" height="3" viewBox="0 0 14 3"><path d="M0 1.5 H3.3 M4.5 1.5 H7.8 M9 1.5 H12.3" stroke="#b4b4b4" stroke-width="1"/></svg>
<svg class="b" style="left:1264px;top:640px;" width="14" height="3" viewBox="0 0 14 3"><path d="M0 1.5 H3.3 M4.5 1.5 H7.8 M9 1.5 H12.3" stroke="#b4b4b4" stroke-width="1"/></svg>
<span class="t" style="top:630.5px;font-size:13.3px;color:#333;letter-spacing:0.114px;left:1364.3px;">Clients 3</span>
<div class="b" style="left:253px;top:660px;width:1166px;height:39px;background:#f9f9f9;"></div>
<div class="b" style="left:253px;top:699px;width:1166px;height:1px;background:#d6d6d6;"></div>
<span class="t" style="top:670.5px;font-size:13px;color:#333;letter-spacing:0.211px;left:368.1px;">10.23.5.0/24</span>
<div class="b" style="left:494px;top:673px;width:88px;height:16px;background:#fff;border:1px solid #1d3c78;border-radius:3px;"></div>
<span class="t" style="top:671.75px;font-size:10px;-webkit-text-stroke:0.2px;color:#1d3c78;transform:scaleX(0.891);transform-origin:50% 50%;left:520.79px;">SCOPE</span>
<span class="t" style="top:670.5px;font-size:13px;color:#333;transform:scaleX(0.9648);transform-origin:100% 50%;left:629.7px;">8%</span>
<div class="b" style="left:657px;top:672px;width:75px;height:16px;background:#fff;border:1px solid #cbcbcf;border-radius:4px;"></div>
<div class="b" style="left:657px;top:672px;width:6.0px;height:16px;background:#7bd03c;border-radius:4px 0 0 4px;"></div>
<span class="t" style="top:670.5px;font-size:13.5px;color:#333;letter-spacing:0.448px;left:764px;">ny failover</span>
<svg class="b" style="left:864px;top:680px;" width="14" height="3" viewBox="0 0 14 3"><path d="M0 1.5 H3.3 M4.5 1.5 H7.8 M9 1.5 H12.3" stroke="#b4b4b4" stroke-width="1"/></svg>
<svg class="b" style="left:964px;top:680px;" width="14" height="3" viewBox="0 0 14 3"><path d="M0 1.5 H3.3 M4.5 1.5 H7.8 M9 1.5 H12.3" stroke="#b4b4b4" stroke-width="1"/></svg>
<svg class="b" style="left:1064px;top:680px;" width="14" height="3" viewBox="0 0 14 3"><path d="M0 1.5 H3.3 M4.5 1.5 H7.8 M9 1.5 H12.3" stroke="#b4b4b4" stroke-width="1"/></svg>
<svg class="b" style="left:1164px;top:680px;" width="14" height="3" viewBox="0 0 14 3"><path d="M0 1.5 H3.3 M4.5 1.5 H7.8 M9 1.5 H12.3" stroke="#b4b4b4" stroke-width="1"/></svg>
<svg class="b" style="left:1264px;top:680px;" width="14" height="3" viewBox="0 0 14 3"><path d="M0 1.5 H3.3 M4.5 1.5 H7.8 M9 1.5 H12.3" stroke="#b4b4b4" stroke-width="1"/></svg>
<span class="t" style="top:670.5px;font-size:13.3px;color:#333;transform:scaleX(0.9904);transform-origin:0 50%;left:1364.3px;">VoIP 1</span>
<div class="b" style="left:253px;top:700px;width:1166px;height:39px;background:#fff;"></div>
<div class="b" style="left:253px;top:739px;width:1166px;height:1px;background:#d6d6d6;"></div>
<span class="t" style="top:710.5px;font-size:13px;color:#333;letter-spacing:0.211px;left:368.1px;">10.23.6.0/24</span>
<div class="b" style="left:494px;top:713px;width:88px;height:16px;background:#fff;border:1px solid #1d3c78;border-radius:3px;"></div>
<span class="t" style="top:711.75px;font-size:10px;-webkit-text-stroke:0.2px;color:#1d3c78;transform:scaleX(0.891);transform-origin:50% 50%;left:520.79px;">SCOPE</span>
<span class="t" style="top:710.5px;font-size:13px;color:#333;transform:scaleX(0.9822);transform-origin:100% 50%;left:622.47px;">20%</span>
<div class="b" style="left:657px;top:712px;width:75px;height:16px;background:#fff;border:1px solid #cbcbcf;border-radius:4px;"></div>
<div class="b" style="left:657px;top:712px;width:15.0px;height:16px;background:#7bd03c;border-radius:4px 0 0 4px;"></div>
<span class="t" style="top:710.5px;font-size:13.5px;color:#333;letter-spacing:0.448px;left:764px;">ny failover</span>
<svg class="b" style="left:864px;top:720px;" width="14" height="3" viewBox="0 0 14 3"><path d="M0 1.5 H3.3 M4.5 1.5 H7.8 M9 1.5 H12.3" stroke="#b4b4b4" stroke-width="1"/></svg>
<svg class="b" style="left:964px;top:720px;" width="14" height="3" viewBox="0 0 14 3"><path d="M0 1.5 H3.3 M4.5 1.5 H7.8 M9 1.5 H12.3" stroke="#b4b4b4" stroke-width="1"/></svg>
<svg class="b" style="left:1064px;top:720px;" width="14" height="3" viewBox="0 0 14 3"><path d="M0 1.5 H3.3 M4.5 1.5 H7.8 M9 1.5 H12.3" stroke="#b4b4b4" stroke-width="1"/></svg>
<svg class="b" style="left:1164px;top:720px;" width="14" height="3" viewBox="0 0 14 3"><path d="M0 1.5 H3.3 M4.5 1.5 H7.8 M9 1.5 H12.3" stroke="#b4b4b4" stroke-width="1"/></svg>
<svg class="b" style="left:1264px;top:720px;" width="14" height="3" viewBox="0 0 14 3"><path d="M0 1.5 H3.3 M4.5 1.5 H7.8 M9 1.5 H12.3" stroke="#b4b4b4" stroke-width="1"/></svg>
<span class="t" style="top:710.5px;font-size:13.3px;color:#333;transform:scaleX(0.9904);transform-origin:0 50%;left:1364.3px;">VoIP 2</span>
<div class="b" style="left:253px;top:740px;width:1166px;height:39px;background:#f9f9f9;"></div>
<div class="b" style="left:253px;top:779px;width:1166px;height:1px;background:#d6d6d6;"></div>
<span class="t" style="top:750.5px;font-size:13px;color:#333;letter-spacing:0.211px;left:368.1px;">10.23.8.0/24</span>
<div class="b" style="left:494px;top:753px;width:88px;height:16px;background:#fff;border:1px solid #1d3c78;border-radius:3px;"></div>
<span class="t" style="top:751.75px;font-size:10px;-webkit-text-stroke:0.2px;color:#1d3c78;transform:scaleX(0.891);transform-origin:50% 50%;left:520.79px;">SCOPE</span>
<span class="t" style="top:750.5px;font-size:13px;color:#333;transform:scaleX(0.9822);transform-origin:100% 50%;left:622.47px;">21%</span>
<div class="b" style="left:657px;top:752px;width:75px;height:16px;background:#fff;border:1px solid #cbcbcf;border-radius:4px;"></div>
<div class="b" style="left:657px;top:752px;width:15.8px;height:16px;background:#7bd03c;border-radius:4px 0 0 4px;"></div>
<span class="t" style="top:750.5px;font-size:13.5px;color:#333;letter-spacing:0.448px;left:764px;">ny failover</span>
<svg class="b" style="left:864px;top:760px;" width="14" height="3" viewBox="0 0 14 3"><path d="M0 1.5 H3.3 M4.5 1.5 H7.8 M9 1.5 H12.3" stroke="#b4b4b4" stroke-width="1"/></svg>
<svg class="b" style="left:964px;top:760px;" width="14" height="3" viewBox="0 0 14 3"><path d="M0 1.5 H3.3 M4.5 1.5 H7.8 M9 1.5 H12.3" stroke="#b4b4b4" stroke-width="1"/></svg>
<svg class="b" style="left:1064px;top:760px;" width="14" height="3" viewBox="0 0 14 3"><path d="M0 1.5 H3.3 M4.5 1.5 H7.8 M9 1.5 H12.3" stroke="#b4b4b4" stroke-width="1"/></svg>
<svg class="b" style="left:1164px;top:760px;" width="14" height="3" viewBox="0 0 14 3"><path d="M0 1.5 H3.3 M4.5 1.5 H7.8 M9 1.5 H12.3" stroke="#b4b4b4" stroke-width="1"/></svg>
<svg class="b" style="left:1264px;top:760px;" width="14" height="3" viewBox="0 0 14 3"><path d="M0 1.5 H3.3 M4.5 1.5 H7.8 M9 1.5 H12.3" stroke="#b4b4b4" stroke-width="1"/></svg>
<span class="t" style="top:750.5px;font-size:13.3px;color:#333;letter-spacing:0.444px;left:1364.3px;">wifi 1</span>
<div class="b" style="left:253px;top:780px;width:1166px;height:39px;background:#fff;"></div>
<div class="b" style="left:253px;top:819px;width:1166px;height:1px;background:#d6d6d6;"></div>
<span class="t" style="top:790.5px;font-size:13px;color:#333;letter-spacing:0.211px;left:368.1px;">10.23.9.0/24</span>
<div class="b" style="left:494px;top:793px;width:88px;height:16px;background:#fff;border:1px solid #1d3c78;border-radius:3px;"></div>
<span class="t" style="top:791.75px;font-size:10px;-webkit-text-stroke:0.2px;color:#1d3c78;transform:scaleX(0.891);transform-origin:50% 50%;left:520.79px;">SCOPE</span>
<span class="t" style="top:790.5px;font-size:13px;color:#333;transform:scaleX(0.9822);transform-origin:100% 50%;left:622.47px;">12%</span>
<div class="b" style="left:657px;top:792px;width:75px;height:16px;background:#fff;border:1px solid #cbcbcf;border-radius:4px;"></div>
<div class="b" style="left:657px;top:792px;width:9.0px;height:16px;background:#7bd03c;border-radius:4px 0 0 4px;"></div>
<span class="t" style="top:790.5px;font-size:13.5px;color:#333;letter-spacing:0.448px;left:764px;">ny failover</span>
<svg class="b" style="left:864px;top:800px;" width="14" height="3" viewBox="0 0 14 3"><path d="M0 1.5 H3.3 M4.5 1.5 H7.8 M9 1.5 H12.3" stroke="#b4b4b4" stroke-width="1"/></svg>
<svg class="b" style="left:964px;top:800px;" width="14" height="3" viewBox="0 0 14 3"><path d="M0 1.5 H3.3 M4.5 1.5 H7.8 M9 1.5 H12.3" stroke="#b4b4b4" stroke-width="1"/></svg>
<svg class="b" style="left:1064px;top:800px;" width="14" height="3" viewBox="0 0 14 3"><path d="M0 1.5 H3.3 M4.5 1.5 H7.8 M9 1.5 H12.3" stroke="#b4b4b4" stroke-width="1"/></svg>
<svg class="b" style="left:1164px;top:800px;" width="14" height="3" viewBox="0 0 14 3"><path d="M0 1.5 H3.3 M4.5 1.5 H7.8 M9 1.5 H12.3" stroke="#b4b4b4" stroke-width="1"/></svg>
<svg class="b" style="left:1264px;top:800px;" width="14" height="3" viewBox="0 0 14 3"><path d="M0 1.5 H3.3 M4.5 1.5 H7.8 M9 1.5 H12.3" stroke="#b4b4b4" stroke-width="1"/></svg>
<span class="t" style="top:790.5px;font-size:13.3px;color:#333;letter-spacing:0.444px;left:1364.3px;">wifi 2</span>
<div class="b" style="left:253px;top:820px;width:1166px;height:39px;background:#f6f6f6;"></div>
<div class="b" style="left:253px;top:859px;width:1166px;height:1px;background:#d6d6d6;"></div>
<svg class="b" style="left:327.6px;top:835px;" width="13" height="9" viewBox="0 0 13 9"><path d="M0.9 1.4 L6.3 6.9 L11.7 1.4" fill="none" stroke="#8e8e8e" stroke-width="1.9"/></svg>
<span class="t" style="top:830.5px;font-size:13px;color:#999;letter-spacing:0.211px;left:347.3px;">10.24.0.0/22</span>
<div class="b" style="left:494px;top:833px;width:88px;height:16px;background:#fcfcfc;border:1px solid #93bd99;border-radius:3px;"></div>
<span class="t" style="top:831.75px;font-size:10px;-webkit-text-stroke:0.2px;color:#82bc88;transform:scaleX(0.9448);transform-origin:50% 50%;left:520.52px;">RANGE</span>
<svg class="b" style="left:614px;top:840px;" width="14" height="3" viewBox="0 0 14 3"><path d="M0 1.5 H3.3 M4.5 1.5 H7.8 M9 1.5 H12.3" stroke="#dcdcdc" stroke-width="1"/></svg>
<svg class="b" style="left:764px;top:840px;" width="14" height="3" viewBox="0 0 14 3"><path d="M0 1.5 H3.3 M4.5 1.5 H7.8 M9 1.5 H12.3" stroke="#dcdcdc" stroke-width="1"/></svg>
<svg class="b" style="left:864px;top:840px;" width="14" height="3" viewBox="0 0 14 3"><path d="M0 1.5 H3.3 M4.5 1.5 H7.8 M9 1.5 H12.3" stroke="#dcdcdc" stroke-width="1"/></svg>
<svg class="b" style="left:964px;top:840px;" width="14" height="3" viewBox="0 0 14 3"><path d="M0 1.5 H3.3 M4.5 1.5 H7.8 M9 1.5 H12.3" stroke="#dcdcdc" stroke-width="1"/></svg>
<svg class="b" style="left:1064px;top:840px;" width="14" height="3" viewBox="0 0 14 3"><path d="M0 1.5 H3.3 M4.5 1.5 H7.8 M9 1.5 H12.3" stroke="#dcdcdc" stroke-width="1"/></svg>
<svg class="b" style="left:1164px;top:840px;" width="14" height="3" viewBox="0 0 14 3"><path d="M0 1.5 H3.3 M4.5 1.5 H7.8 M9 1.5 H12.3" stroke="#dcdcdc" stroke-width="1"/></svg>
<svg class="b" style="left:1264px;top:840px;" width="14" height="3" viewBox="0 0 14 3"><path d="M0 1.5 H3.3 M4.5 1.5 H7.8 M9 1.5 H12.3" stroke="#dcdcdc" stroke-width="1"/></svg>
<span class="t" style="top:830.5px;font-size:13.3px;color:#999;letter-spacing:0.584px;left:1364.3px;">Bronx</span>
<div class="b" style="left:253px;top:860px;width:1166px;height:39px;background:#fff;"></div>
<div class="b" style="left:253px;top:899px;width:1166px;height:1px;background:#d6d6d6;"></div>
<span class="t" style="top:870.5px;font-size:13px;color:#333;letter-spacing:0.21px;left:368.1px;">10.24.0.192/27</span>
<div class="b" style="left:494px;top:873px;width:88px;height:16px;background:#fff;border:1px solid #1d3c78;border-radius:3px;"></div>
<span class="t" style="top:871.75px;font-size:10px;-webkit-text-stroke:0.2px;color:#1d3c78;transform:scaleX(0.891);transform-origin:50% 50%;left:520.79px;">SCOPE</span>
<span class="t" style="top:870.5px;font-size:13px;color:#333;transform:scaleX(0.9822);transform-origin:100% 50%;left:622.47px;">62%</span>
<div class="b" style="left:657px;top:872px;width:75px;height:16px;background:#fff;border:1px solid #cbcbcf;border-radius:4px;"></div>
<div class="b" style="left:657px;top:872px;width:46.5px;height:16px;background:#d4b23c;border-radius:4px 0 0 4px;"></div>
<span class="t" style="top:870.5px;font-size:13.5px;color:#333;letter-spacing:0.448px;left:764px;">ny failover</span>
<span class="t" style="top:870.5px;font-size:13.5px;color:#333;letter-spacing:0.696px;left:864px;">Bronx</span>
<svg class="b" style="left:964px;top:880px;" width="14" height="3" viewBox="0 0 14 3"><path d="M0 1.5 H3.3 M4.5 1.5 H7.8 M9 1.5 H12.3" stroke="#b4b4b4" stroke-width="1"/></svg>
<svg class="b" style="left:1064px;top:880px;" width="14" height="3" viewBox="0 0 14 3"><path d="M0 1.5 H3.3 M4.5 1.5 H7.8 M9 1.5 H12.3" stroke="#b4b4b4" stroke-width="1"/></svg>
<svg class="b" style="left:1164px;top:880px;" width="14" height="3" viewBox="0 0 14 3"><path d="M0 1.5 H3.3 M4.5 1.5 H7.8 M9 1.5 H12.3" stroke="#b4b4b4" stroke-width="1"/></svg>
<svg class="b" style="left:1264px;top:880px;" width="14" height="3" viewBox="0 0 14 3"><path d="M0 1.5 H3.3 M4.5 1.5 H7.8 M9 1.5 H12.3" stroke="#b4b4b4" stroke-width="1"/></svg>
<span class="t" style="top:870.5px;font-size:13.3px;color:#333;letter-spacing:0.418px;left:1364.3px;">Vendors</span>
<div class="b" style="left:253px;top:900px;width:1166px;height:39px;background:#f9f9f9;"></div>
<div class="b" style="left:253px;top:939px;width:1166px;height:1px;background:#d6d6d6;"></div>
<span class="t" style="top:910.5px;font-size:13px;color:#333;letter-spacing:0.211px;left:368.1px;">10.24.1.0/24</span>
<div class="b" style="left:494px;top:913px;width:88px;height:16px;background:#fff;border:1px solid #1d3c78;border-radius:3px;"></div>
<span class="t" style="top:911.75px;font-size:10px;-webkit-text-stroke:0.2px;color:#1d3c78;transform:scaleX(0.891);transform-origin:50% 50%;left:520.79px;">SCOPE</span>
<span class="t" style="top:910.5px;font-size:13px;color:#333;transform:scaleX(0.9822);transform-origin:100% 50%;left:622.47px;">12%</span>
<div class="b" style="left:657px;top:912px;width:75px;height:16px;background:#fff;border:1px solid #cbcbcf;border-radius:4px;"></div>
<div class="b" style="left:657px;top:912px;width:9.0px;height:16px;background:#7bd03c;border-radius:4px 0 0 4px;"></div>
<span class="t" style="top:910.5px;font-size:13.5px;color:#333;letter-spacing:0.448px;left:764px;">ny failover</span>
<span class="t" style="top:910.5px;font-size:13.5px;color:#333;letter-spacing:0.696px;left:864px;">Bronx</span>
<svg class="b" style="left:964px;top:920px;" width="14" height="3" viewBox="0 0 14 3"><path d="M0 1.5 H3.3 M4.5 1.5 H7.8 M9 1.5 H12.3" stroke="#b4b4b4" stroke-width="1"/></svg>
<svg class="b" style="left:1064px;top:920px;" width="14" height="3" viewBox="0 0 14 3"><path d="M0 1.5 H3.3 M4.5 1.5 H7.8 M9 1.5 H12.3" stroke="#b4b4b4" stroke-width="1"/></svg>
<svg class="b" style="left:1164px;top:920px;" width="14" height="3" viewBox="0 0 14 3"><path d="M0 1.5 H3.3 M4.5 1.5 H7.8 M9 1.5 H12.3" stroke="#b4b4b4" stroke-width="1"/></svg>
<svg class="b" style="left:1264px;top:920px;" width="14" height="3" viewBox="0 0 14 3"><path d="M0 1.5 H3.3 M4.5 1.5 H7.8 M9 1.5 H12.3" stroke="#b4b4b4" stroke-width="1"/></svg>
<span class="t" style="top:910.5px;font-size:13.3px;color:#333;letter-spacing:0.129px;left:1364.3px;">Wireless</span>
<div class="b" style="left:253px;top:940px;width:1166px;height:39px;background:#fff;"></div>
<div class="b" style="left:253px;top:979px;width:1166px;height:1px;background:#d6d6d6;"></div>
<span class="t" style="top:950.5px;font-size:13px;color:#333;letter-spacing:0.211px;left:368.1px;">10.24.2.0/24</span>
<div class="b" style="left:494px;top:953px;width:88px;height:16px;background:#fff;border:1px solid #1d3c78;border-radius:3px;"></div>
<span class="t" style="top:951.75px;font-size:10px;-webkit-text-stroke:0.2px;color:#1d3c78;transform:scaleX(0.891);transform-origin:50% 50%;left:520.79px;">SCOPE</span>
<span class="t" style="top:950.5px;font-size:13px;color:#333;transform:scaleX(0.9822);transform-origin:100% 50%;left:622.47px;">12%</span>
<div class="b" style="left:657px;top:952px;width:75px;height:16px;background:#fff;border:1px solid #cbcbcf;border-radius:4px;"></div>
<div class="b" style="left:657px;top:952px;width:9.0px;height:16px;background:#7bd03c;border-radius:4px 0 0 4px;"></div>
<span class="t" style="top:950.5px;font-size:13.5px;color:#333;letter-spacing:0.448px;left:764px;">ny failover</span>
<span class="t" style="top:950.5px;font-size:13.5px;color:#333;letter-spacing:0.696px;left:864px;">Bronx</span>
<svg class="b" style="left:964px;top:960px;" width="14" height="3" viewBox="0 0 14 3"><path d="M0 1.5 H3.3 M4.5 1.5 H7.8 M9 1.5 H12.3" stroke="#b4b4b4" stroke-width="1"/></svg>
<svg class="b" style="left:1064px;top:960px;" width="14" height="3" viewBox="0 0 14 3"><path d="M0 1.5 H3.3 M4.5 1.5 H7.8 M9 1.5 H12.3" stroke="#b4b4b4" stroke-width="1"/></svg>
<svg class="b" style="left:1164px;top:960px;" width="14" height="3" viewBox="0 0 14 3"><path d="M0 1.5 H3.3 M4.5 1.5 H7.8 M9 1.5 H12.3" stroke="#b4b4b4" stroke-width="1"/></svg>
<svg class="b" style="left:1264px;top:960px;" width="14" height="3" viewBox="0 0 14 3"><path d="M0 1.5 H3.3 M4.5 1.5 H7.8 M9 1.5 H12.3" stroke="#b4b4b4" stroke-width="1"/></svg>
<span class="t" style="top:950.5px;font-size:13.3px;color:#333;letter-spacing:0.162px;left:1364.3px;">Clients</span>
<div class="b" style="left:253px;top:980px;width:1166px;height:39px;background:#f9f9f9;"></div>
<div class="b" style="left:253px;top:1019px;width:1166px;height:1px;background:#d6d6d6;"></div>
<span class="t" style="top:990.5px;font-size:13px;color:#333;letter-spacing:0.211px;left:368.1px;">10.24.3.0/24</span>
<div class="b" style="left:494px;top:993px;width:88px;height:16px;background:#fff;border:1px solid #1d3c78;border-radius:3px;"></div>
<span class="t" style="top:991.75px;font-size:10px;-webkit-text-stroke:0.2px;color:#1d3c78;transform:scaleX(0.891);transform-origin:50% 50%;left:520.79px;">SCOPE</span>
<span class="t" style="top:990.5px;font-size:13px;color:#333;transform:scaleX(0.9822);transform-origin:100% 50%;left:622.47px;">15%</span>
<div class="b" style="left:657px;top:992px;width:75px;height:16px;background:#fff;border:1px solid #cbcbcf;border-radius:4px;"></div>
<div class="b" style="left:657px;top:992px;width:11.2px;height:16px;background:#7bd03c;border-radius:4px 0 0 4px;"></div>
<span class="t" style="top:990.5px;font-size:13.5px;color:#333;letter-spacing:0.448px;left:764px;">ny failover</span>
<span class="t" style="top:990.5px;font-size:13.5px;color:#333;letter-spacing:0.696px;left:864px;">Bronx</span>
<svg class="b" style="left:964px;top:1000px;" width="14" height="3" viewBox="0 0 14 3"><path d="M0 1.5 H3.3 M4.5 1.5 H7.8 M9 1.5 H12.3" stroke="#b4b4b4" stroke-width="1"/></svg>
<svg class="b" style="left:1064px;top:1000px;" width="14" height="3" viewBox="0 0 14 3"><path d="M0 1.5 H3.3 M4.5 1.5 H7.8 M9 1.5 H12.3" stroke="#b4b4b4" stroke-width="1"/></svg>
<svg class="b" style="left:1164px;top:1000px;" width="14" height="3" viewBox="0 0 14 3"><path d="M0 1.5 H3.3 M4.5 1.5 H7.8 M9 1.5 H12.3" stroke="#b4b4b4" stroke-width="1"/></svg>
<svg class="b" style="left:1264px;top:1000px;" width="14" height="3" viewBox="0 0 14 3"><path d="M0 1.5 H3.3 M4.5 1.5 H7.8 M9 1.5 H12.3" stroke="#b4b4b4" stroke-width="1"/></svg>
<span class="t" style="top:990.5px;font-size:13.3px;color:#333;transform:scaleX(0.9185);transform-origin:0 50%;left:1364.3px;">IPT</span>
</div>
<div class="b" style="left:1419px;top:220px;width:16px;height:796px;background:#f1f1f1;"></div>
<div class="b" style="left:1421px;top:237px;width:13px;height:353px;background:#c1c1c1;"></div>
<svg class="b" style="left:1423px;top:226px;" width="9" height="6" viewBox="0 0 9 6"><path d="M0.7 5 L4.45 0.8 L8.2 5 Z" fill="#a3a3a3"/></svg>
<svg class="b" style="left:1423px;top:1005px;" width="9" height="6" viewBox="0 0 9 6"><path d="M0.7 0.9 L4.45 5.1 L8.2 0.9 Z" fill="#505050"/></svg>
<div class="b" style="left:253px;top:1016px;width:1182px;height:16px;background:#f1f1f1;"></div>
<div class="b" style="left:269px;top:1018px;width:1051px;height:13px;background:#c1c1c1;"></div>
<svg class="b" style="left:257px;top:1020px;" width="6" height="9" viewBox="0 0 6 9"><path d="M5.2 0.8 L0.8 4.6 L5.2 8.4 Z" fill="#a3a3a3"/></svg>
<svg class="b" style="left:1425px;top:1020px;" width="6" height="9" viewBox="0 0 6 9"><path d="M0.9 0.8 L5.3 4.6 L0.9 8.4 Z" fill="#505050"/></svg>
<span class="t" style="top:1045.0px;font-size:14px;color:#555;letter-spacing:0.21px;left:264px;">Showing </span>
<span class="t" style="top:1045.0px;font-size:14px;font-weight:700;color:#444;letter-spacing:0.404px;left:323.5px;">32</span>
<span class="t" style="top:1045.0px;font-size:14px;color:#555;letter-spacing:0.524px;left:340px;"> networks</span>
<span class="t" style="top:1045.0px;font-size:14px;color:#555;letter-spacing:0.08px;left:1254.5px;">Address space: </span>
<span class="t" style="top:1045.0px;font-size:14px;font-weight:700;color:#444;letter-spacing:0.529px;left:1355.26px;">&lt;Default&gt;</span>
<div class="b" style="left:1460px;top:113px;width:1px;height:964px;background:#cfcfcf;"></div>
<div class="b" style="left:1461px;top:113px;width:242px;height:39px;background:#f2f2f2;"></div>
<div class="b" style="left:1461px;top:152px;width:242px;height:1px;background:#d0d0d0;"></div>
<span class="t" style="top:122.5px;font-size:13px;font-weight:700;color:#555;transform:scaleX(0.9129);transform-origin:0 50%;left:1477.3px;">PROPERTIES</span>
<span class="t" style="top:171.5px;font-size:13px;color:#8a8a8a;letter-spacing:0.458px;left:1485.2px;">Utilization</span>
<span class="t" style="top:171.5px;font-size:13px;color:#444;left:1674.96px;">-</span>
<span class="t" style="top:195.5px;font-size:13px;color:#8a8a8a;letter-spacing:0.19px;left:1485.2px;">Locked</span>
<span class="t" style="top:195.5px;font-size:13px;color:#444;letter-spacing:1.028px;left:1661.65px;">No</span>
<span class="t" style="top:219.5px;font-size:13px;color:#8a8a8a;letter-spacing:0.348px;left:1485.2px;">Subnet</span>
<span class="t" style="top:219.5px;font-size:13px;color:#444;letter-spacing:1.028px;left:1661.65px;">No</span>
<span class="t" style="top:243.5px;font-size:13px;color:#8a8a8a;letter-spacing:0.576px;left:1485.2px;">Name</span>
<span class="t" style="top:243.5px;font-size:13px;color:#444;letter-spacing:0.214px;left:1619.55px;">10.0.0.0/8</span>
<span class="t" style="top:267.5px;font-size:13px;color:#8a8a8a;letter-spacing:0.272px;left:1485.2px;">Type</span>
<span class="t" style="top:267.5px;font-size:13px;color:#444;transform:scaleX(0.983);transform-origin:100% 50%;left:1640.99px;">Range</span>
<span class="t" style="top:291.5px;font-size:13px;color:#8a8a8a;letter-spacing:0.393px;left:1485.2px;">Title</span>
<span class="t" style="top:291.5px;font-size:13px;color:#444;letter-spacing:0.42px;left:1596.51px;">Internal block</span>
<span class="t" style="top:315.5px;font-size:13px;color:#8a8a8a;letter-spacing:0.44px;left:1485.2px;">Description</span>
<span class="t" style="top:315.5px;font-size:13px;color:#444;left:1674.96px;">-</span>
<span class="t" style="top:339.5px;font-size:13px;color:#8a8a8a;letter-spacing:0.346px;left:1485.2px;">vlan id</span>
<span class="t" style="top:339.5px;font-size:13px;color:#444;left:1674.96px;">-</span>
<span class="t" style="top:363.5px;font-size:13px;color:#8a8a8a;letter-spacing:0.272px;left:1485.2px;">Created</span>
<span class="t" style="top:363.5px;font-size:13px;color:#444;letter-spacing:0.291px;left:1573.72px;">03/08/2023 16:26</span>
<span class="t" style="top:387.5px;font-size:13px;color:#8a8a8a;letter-spacing:0.229px;left:1485.2px;">Last modi...</span>
<span class="t" style="top:387.5px;font-size:13px;color:#444;letter-spacing:0.291px;left:1573.72px;">03/08/2023 16:26</span>
<span class="t" style="top:429.5px;font-size:10px;color:#444;transform:scaleX(0.908);transform-origin:0 50%;left:1547.5px;">SHOW LESS</span>
<svg class="b" style="left:1606px;top:434px;" width="12" height="9" viewBox="0 0 12 9"><path d="M1.2 7.2 L6 2.2 L10.8 7.2" fill="none" stroke="#333" stroke-width="1.9"/></svg>
<div class="b" style="left:1461px;top:455px;width:242px;height:1px;background:#d0d0d0;"></div>
<div class="b" style="left:1461px;top:456px;width:242px;height:39px;background:#f2f2f2;"></div>
<div class="b" style="left:1461px;top:495px;width:242px;height:1px;background:#d0d0d0;"></div>
<span class="t" style="top:465.5px;font-size:13px;font-weight:700;color:#555;letter-spacing:0.304px;left:1477.3px;">MONITORING</span>
<span class="t" style="top:514.5px;font-size:13px;color:#8a8a8a;letter-spacing:0.208px;left:1485.2px;">Discovery schedule</span>
<span class="t" style="top:514.5px;font-size:13px;color:#444;letter-spacing:1.028px;left:1661.65px;">No</span>
<span class="t" style="top:538.5px;font-size:13px;color:#8a8a8a;letter-spacing:0.509px;left:1485.2px;">Subnet monitoring</span>
<span class="t" style="top:538.5px;font-size:13px;color:#444;letter-spacing:1.028px;left:1661.65px;">No</span>
<div class="b" style="left:1461px;top:576px;width:242px;height:1px;background:#d0d0d0;"></div>
<svg class="b" style="left:265px;top:144px;" width="14" height="10" viewBox="0 0 14 10"><path d="M1.4 2 L7 7.6 L12.6 2" fill="none" stroke="#f2c230" stroke-width="2.1"/></svg>
<svg class="b" style="left:367px;top:142px;" width="14" height="14" viewBox="0 0 14 14"><path d="M1.2 7 H12 M7.2 1.8 L12.3 7 L7.2 12.2" fill="none" stroke="#f2c230" stroke-width="1.8"/></svg>
<svg class="b" style="left:457.6px;top:140.8px;" width="16.4" height="16.4" viewBox="0 0 24 24"><path fill="#f2c230" d="M3 17.25V21h3.75L17.81 9.94l-3.75-3.75L3 17.25zM20.71 7.04c.39-.39.39-1.02 0-1.41l-2.34-2.34c-.39-.39-1.02-.39-1.41 0l-1.83 1.83 3.75 3.75 1.83-1.83z"/></svg>
<svg class="b" style="left:589px;top:144px;" width="14" height="10" viewBox="0 0 14 10"><path d="M1.4 2 L7 7.6 L12.6 2" fill="none" stroke="#f2c230" stroke-width="2.1"/></svg>
<svg class="b" style="left:954.5px;top:138.3px;" width="23.5" height="23.5" viewBox="0 0 24 24"><path fill="#999" d="M12 17.27L18.18 21l-1.64-7.03L22 9.24l-7.19-.61L12 2 9.19 8.63 2 9.24l5.46 4.73L5.82 21z"/></svg>
<svg class="b" style="left:997.3px;top:140.6px;" width="18" height="18" viewBox="0 0 24 24"><path fill="#666" d="M15.5 14h-.79l-.28-.27C15.41 12.59 16 11.11 16 9.5 16 5.91 13.09 3 9.5 3S3 5.91 3 9.5 5.91 16 9.5 16c1.61 0 3.09-.59 4.23-1.57l.27.28v.79l5 4.99L20.49 19l-4.99-5zm-6 0C7.01 14 5 11.99 5 9.5S7.01 5 9.5 5 14 7.01 14 9.5 11.99 14 9.5 14z"/></svg>
<svg class="b" style="left:1030px;top:141px;" width="18" height="18" viewBox="0 0 18 18"><path d="M1.8 1.9 H15.1 L10.3 7.6 V15.2 L6.6 12.6 V7.6 Z" fill="#ffe000"/></svg>
<svg class="b" style="left:1300px;top:142px;" width="16" height="16" viewBox="0 0 16 16"><rect x="0" y="0" width="4" height="4" fill="#8f8f8f"/><rect x="0" y="6" width="4" height="4" fill="#8f8f8f"/><rect x="0" y="12" width="4" height="4" fill="#8f8f8f"/><rect x="6" y="0" width="4" height="4" fill="#8f8f8f"/><rect x="6" y="6" width="4" height="4" fill="#8f8f8f"/><rect x="6" y="12" width="4" height="4" fill="#8f8f8f"/><rect x="12" y="0" width="4" height="4" fill="#8f8f8f"/><rect x="12" y="6" width="4" height="4" fill="#8f8f8f"/><rect x="12" y="12" width="4" height="4" fill="#8f8f8f"/></svg>
<svg class="b" style="left:1331px;top:142px;" width="18" height="16" viewBox="0 0 18 16"><g fill="#fff"><rect x="7" y="1.3" width="4.2" height="4.2"/><rect x="0.8" y="10.6" width="4.2" height="4.2"/><rect x="7" y="10.6" width="4.2" height="4.2"/><rect x="13.2" y="10.6" width="4.2" height="4.2"/></g><path d="M9.1 5 V11 M2.9 11 V8 H15.3 V11" fill="none" stroke="#fff" stroke-width="1"/></svg>
<svg class="b" style="left:1371px;top:142px;" width="18" height="14" viewBox="0 0 18 14"><g fill="#999"><rect x="0" y="0" width="4.9" height="13.9"/><rect x="6.5" y="0" width="5" height="9.3"/><rect x="13" y="0" width="4.9" height="7.1"/></g></svg>
<svg class="b" style="left:1410.9px;top:139.9px;" width="18" height="18" viewBox="0 0 24 24"><path fill="#8f8f8f" d="M12 6v3l4-4-4-4v3c-4.42 0-8 3.58-8 8 0 1.57.46 3.03 1.24 4.26L6.7 14.8c-.45-.83-.7-1.79-.7-2.8 0-3.31 2.69-6 6-6zm6.76 1.74L17.3 9.2c.44.84.7 1.79.7 2.8 0 3.31-2.69 6-6 6v-3l-4 4 4 4v-3c4.42 0 8-3.58 8-8 0-1.57-.46-3.03-1.24-4.26z"/></svg>
<svg class="b" style="left:1510.9px;top:26.3px;" width="21.8" height="21.8" viewBox="0 0 24 24"><path d="M7 2v11h3v9l7-12h-4l4-8z" fill="#b9b9b9"/></svg>
<svg class="b" style="left:1555.3px;top:27.9px;" width="18" height="18" viewBox="0 0 18 18"><path d="M2.2 0 H15.4 Q17.6 0 17.6 2.2 V15.7 Q17.6 17.9 15.4 17.9 H2.2 Q0 17.9 0 15.7 V2.2 Q0 0 2.2 0 Z M2.1 6.2 V15.8 H15.5 V6.2 Z" fill="#4a4a4a" fill-rule="evenodd"/><circle cx="8.7" cy="6.3" r="2.5" fill="#161616"/><path d="M8.7 6.6 L12.3 10.5 H10.4 V14 H7 V10.5 H5.1 Z" fill="#4a4a4a"/></svg>
<svg class="b" style="left:1592px;top:23px;" width="28" height="28" viewBox="0 0 24 24"><path fill="#b9b9b9" d="M12 12c2.21 0 4-1.79 4-4s-1.79-4-4-4-4 1.79-4 4 1.79 4 4 4zm0 2c-2.67 0-8 1.34-8 4v2h16v-2c0-2.66-5.33-4-8-4z"/></svg>
<svg class="b" style="left:1622px;top:33px;" width="12" height="8" viewBox="0 0 12 8"><path d="M1.4 1.5 L6 6 L10.6 1.5" fill="none" stroke="#b9b9b9" stroke-width="2.1"/></svg>
<svg class="b" style="left:1655.1px;top:25px;" width="24" height="24" viewBox="0 0 24 24"><path fill="#b9b9b9" d="M11 18h2v-2h-2v2zm1-16C6.48 2 2 6.48 2 12s4.48 10 10 10 10-4.48 10-10S17.52 2 12 2zm0 18c-4.41 0-8-3.59-8-8s3.59-8 8-8 8 3.59 8 8-3.59 8-8 8zm0-14c-2.21 0-4 1.79-4 4h2c0-1.1.9-2 2-2s2 .9 2 2c0 2-3 1.75-3 5h2c0-2.25 3-2.5 3-5 0-2.21-1.79-4-4-4z"/></svg>
<svg class="b" style="left:1647.4px;top:124px;" width="16.6" height="16.6" viewBox="0 0 24 24"><path fill="#333" d="M3 17.25V21h3.75L17.81 9.94l-3.75-3.75L3 17.25zM20.71 7.04c.39-.39.39-1.02 0-1.41l-2.34-2.34c-.39-.39-1.02-.39-1.41 0l-1.83 1.83 3.75 3.75 1.83-1.83z"/></svg>
<svg class="b" style="left:1674px;top:129px;" width="14" height="9" viewBox="0 0 14 9"><path d="M1.2 1.4 L7 7 L12.8 1.4" fill="none" stroke="#c2c2c2" stroke-width="2"/></svg>
<svg class="b" style="left:1674px;top:472px;" width="14" height="9" viewBox="0 0 14 9"><path d="M1.2 1.4 L7 7 L12.8 1.4" fill="none" stroke="#a6a6a6" stroke-width="2"/></svg>
<svg class="b" style="left:200px;top:246px;" width="10" height="14" viewBox="0 0 10 14"><path d="M1.6 1.4 L7.6 7 L1.6 12.6" fill="none" stroke="#4a4a4a" stroke-width="1.9"/></svg>
<svg class="b" style="left:200px;top:286px;" width="10" height="14" viewBox="0 0 10 14"><path d="M1.6 1.4 L7.6 7 L1.6 12.6" fill="none" stroke="#4a4a4a" stroke-width="1.9"/></svg>
<svg class="b" style="left:14px;top:124px;" width="18" height="18" viewBox="0 0 18 18"><g transform="translate(8.6 8.8) scale(0.94) translate(-9 -9)"><g fill="none" stroke="#8a8a8a" stroke-width="0.8"><polygon points="9,1 16.2,5 16.2,13.4 9,17.4 1.8,13.4 1.8,5"/><polygon points="9,2.5 15,13 3,13"/><path d="M1.8 5 L16.2 5 M1.8 5 L9 17.4 M16.2 5 L9 17.4 M1.8 13.4 L9 1 M16.2 13.4 L9 1 M3 13 L15 13"/><circle cx="9" cy="9.6" r="1.6"/></g></g></svg>
<svg class="b" style="left:14px;top:164px;" width="18" height="18" viewBox="0 0 18 18"><g transform="translate(8.6 8.8) scale(0.94) translate(-9 -9)"><g fill="none" stroke="#555" stroke-width="1.1"><rect x="1.6" y="2.6" width="4.2" height="4.2"/><rect x="1.6" y="12.2" width="4.2" height="4.2"/><rect x="7.4" y="2.6" width="4.2" height="4.2"/><rect x="7.4" y="12.2" width="4.2" height="4.2"/><rect x="13.2" y="2.6" width="4.2" height="4.2"/><rect x="13.2" y="12.2" width="4.2" height="4.2"/><path d="M3.7 6.8 V12.2 M9.5 6.8 V12.2 M15.3 6.8 V12.2 M3.7 9.5 H15.3"/></g></g></svg>
<svg class="b" style="left:14px;top:204px;" width="18" height="18" viewBox="0 0 18 18"><g transform="translate(8.6 8.8) scale(0.94) translate(-9 -9)"><g fill="none" stroke="#ffe600" stroke-width="1.2"><rect x="5.4" y="2.6" width="8.2" height="4.4"/><rect x="1.6" y="12" width="4.2" height="4.2"/><rect x="7.4" y="12" width="4.2" height="4.2"/><rect x="13.2" y="12" width="4.2" height="4.2"/><path d="M9.5 7 V12 M3.7 12 V9.6 H15.3 V12 M7.6 4.8 H11.4"/></g></g></svg>
<svg class="b" style="left:14px;top:244px;" width="18" height="18" viewBox="0 0 18 18"><g transform="translate(8.6 8.8) scale(0.94) translate(-9 -9)"><path d="M5.2 14 H4.6 Q1.2 13.6 1.4 10.4 Q1.8 7.6 4.6 7.6 Q5.4 3.2 9.4 3.2 Q13.2 3.2 14 7 Q17 7.4 17 10.6 Q16.8 13.6 13.8 14 H13.4" fill="none" stroke="#555" stroke-width="1.2"/><rect x="6.4" y="11" width="6" height="5.6" fill="#8a8a8a"/><path d="M6.4 13.8 H12.4 M9.4 11 V16.6" stroke="#5a5a5a" stroke-width="0.8"/></g></svg>
<svg class="b" style="left:14px;top:284px;" width="18" height="18" viewBox="0 0 18 18"><g transform="translate(8.6 8.8) scale(0.94) translate(-9 -9)"><rect x="1.2" y="2.4" width="16" height="13.4" fill="#9a9a9a"/><g fill="#454545"><rect x="1.2" y="2.4" width="4.6" height="3.6"/><rect x="1.2" y="7.3" width="4.6" height="3.6"/><rect x="1.2" y="12.2" width="4.6" height="3.6"/><rect x="6.9" y="2.4" width="4.6" height="3.6"/><rect x="6.9" y="7.3" width="4.6" height="3.6"/><rect x="6.9" y="12.2" width="4.6" height="3.6"/><rect x="12.6" y="2.4" width="4.6" height="3.6"/><rect x="12.6" y="7.3" width="4.6" height="3.6"/><rect x="12.6" y="12.2" width="4.6" height="3.6"/></g></g></svg>
<svg class="b" style="left:14px;top:324px;" width="18" height="18" viewBox="0 0 18 18"><g transform="translate(8.6 8.8) scale(0.94) translate(-9 -9)"><g fill="none" stroke="#454545" stroke-width="1.2"><rect x="1.6" y="2.2" width="15.2" height="4.6" rx="1"/><path d="M2.6 6.8 V16.6 H15.8 V6.8"/><rect x="6.6" y="9.4" width="5.2" height="2.2" stroke-width="1"/><path d="M2 3.6 H16.4" stroke-width="0.8"/></g></g></svg>
<svg class="b" style="left:13.8px;top:364.8px;" width="18.4" height="18.4" viewBox="0 0 24 24"><path fill="#4a4a4a" d="M12 17.27L18.18 21l-1.64-7.03L22 9.24l-7.19-.61L12 2 9.19 8.63 2 9.24l5.46 4.73L5.82 21z"/></svg>
<svg class="b" style="left:14px;top:404px;" width="19" height="19" viewBox="0 0 19 19"><path d="M7 12.8 A5.6 5.6 0 1 1 12.3 5.6" fill="none" stroke="#555" stroke-width="1.2"/><path d="M6.9 4.2 V7.6 L8.9 9.2" fill="none" stroke="#555" stroke-width="1.2"/><circle cx="11.6" cy="12.2" r="2.4" fill="none" stroke="#555" stroke-width="1.2"/><path d="M13.4 14 L16.4 16.8" stroke="#555" stroke-width="1.3"/></svg>
<svg class="b" style="left:14px;top:444px;" width="19" height="19" viewBox="0 0 19 19"><circle cx="6.9" cy="7.1" r="5.6" fill="none" stroke="#555" stroke-width="1.2"/><path d="M6.9 4.2 V7.6 L8.9 9.2" fill="none" stroke="#555" stroke-width="1.2"/><path d="M11.8 14.7 H17 M14.4 12.1 V17.3" stroke="#333" stroke-width="1.3"/></svg>
<svg class="b" style="left:14px;top:484px;" width="19" height="19" viewBox="0 0 19 19"><path d="M6 12.6 A5.6 5.6 0 1 1 12.4 6.2" fill="none" stroke="#555" stroke-width="1.2"/><path d="M6.9 4.2 V7.6 L8.9 9.2" fill="none" stroke="#555" stroke-width="1.2"/><path d="M8.4 16.4 L9 13.6 L14.4 8.4 Q15.2 7.8 16 8.6 L16.6 9.2 Q17.2 10 16.6 10.6 L11.2 15.8 Z M13.2 9.6 L15.4 11.8" fill="none" stroke="#555" stroke-width="1.2" stroke-linejoin="round"/></svg>
<svg class="b" style="left:14px;top:524px;" width="18" height="18" viewBox="0 0 18 18"><path d="M9 2.4 L16.4 15 H1.6 Z" fill="none" stroke="#555" stroke-width="1.2" stroke-linejoin="round"/><path d="M9 7.2 V11.4 M9 12.6 V13.8" stroke="#555" stroke-width="1.3"/></svg>
<svg class="b" style="left:19px;top:1011px;" width="16" height="14" viewBox="0 0 16 14"><g fill="#ffe600"><rect x="1" y="2" width="2" height="2.2"/><rect x="3.6" y="2" width="11.4" height="2.2"/><rect x="1" y="6.2" width="2" height="2.2"/><rect x="3.6" y="6.2" width="11.4" height="2.2"/><rect x="1" y="10.4" width="2" height="2.2"/><rect x="3.6" y="10.4" width="11.4" height="2.2"/></g></svg>
<svg class="b" style="left:76px;top:1010px;" width="16" height="15" viewBox="0 0 16 15"><path d="M0 2 Q0 1 1 1 H6 L8 3 H15 Q16 3 16 4 V13.8 Q16 14.8 15 14.8 H1 Q0 14.8 0 13.8 Z" fill="#606060"/></svg>
<svg class="b" style="left:133px;top:1011px;" width="18" height="14" viewBox="0 0 18 14"><g fill="none" stroke="#555" stroke-width="1"><circle cx="3" cy="2.4" r="1.5"/><circle cx="3" cy="7" r="1.5"/><circle cx="3" cy="11.6" r="1.5"/><circle cx="15" cy="7" r="1.5"/><path d="M4.5 2.4 H8 V11.6 H4.5 M4.5 7 H13.5"/></g></svg>
<svg class="b" style="left:16px;top:1051px;" width="14" height="12" viewBox="0 0 14 12"><path d="M6.4 1.2 L1.8 6 L6.4 10.8 M12.2 1.2 L7.6 6 L12.2 10.8" fill="none" stroke="#555" stroke-width="1.9"/></svg>
<svg class="b" style="left:22px;top:1091.6px;" width="18" height="18" viewBox="0 0 24 24"><path fill="#c4c4c4" d="M10 20v-6h4v6h5v-8h3L12 3 2 12h3v8z"/></svg>
</body></html>
